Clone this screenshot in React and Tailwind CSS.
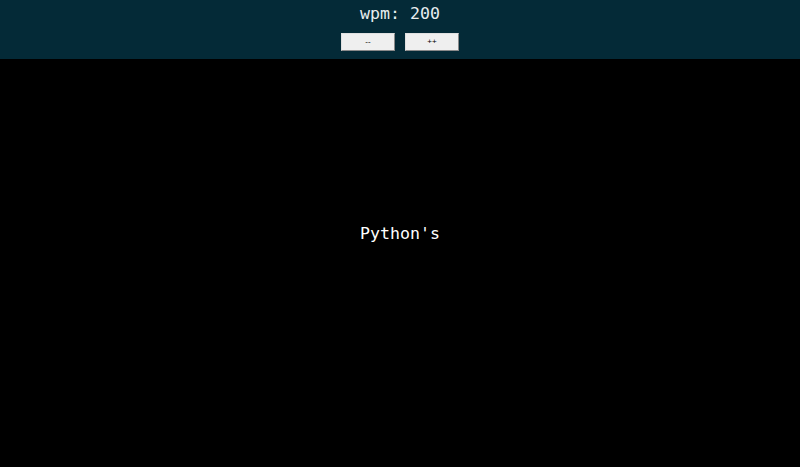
export default function App() {
  return (
    <div className="w-[800px] h-[467px] flex flex-col bg-black" style={{ fontFamily: '"DejaVu Sans Mono", monospace' }}>
      <div className="h-[59px] bg-[#042a37] flex flex-col items-center shrink-0">
        <div className="mt-[3px] text-[16.6px] leading-[22px] text-[#e8eef0]">wpm: 200</div>
        <div className="mt-[8px] flex gap-[10px]">
          <button className="w-[54px] h-[18px] bg-[#efefef] border border-[#e0e0e0] border-r-[#8a8a8a] border-b-[#8a8a8a] text-[8px] leading-none text-black" style={{ fontFamily: '"Liberation Sans", sans-serif' }}>--</button>
          <button className="w-[54px] h-[18px] bg-[#efefef] border border-[#e0e0e0] border-r-[#8a8a8a] border-b-[#8a8a8a] text-[8px] leading-none text-black" style={{ fontFamily: '"Liberation Sans", sans-serif' }}>++</button>
        </div>
      </div>
      <div className="flex-1 flex items-center justify-center pb-[58px]">
        <span className="text-[16.6px] text-white">Python's</span>
      </div>
    </div>
  );
}
